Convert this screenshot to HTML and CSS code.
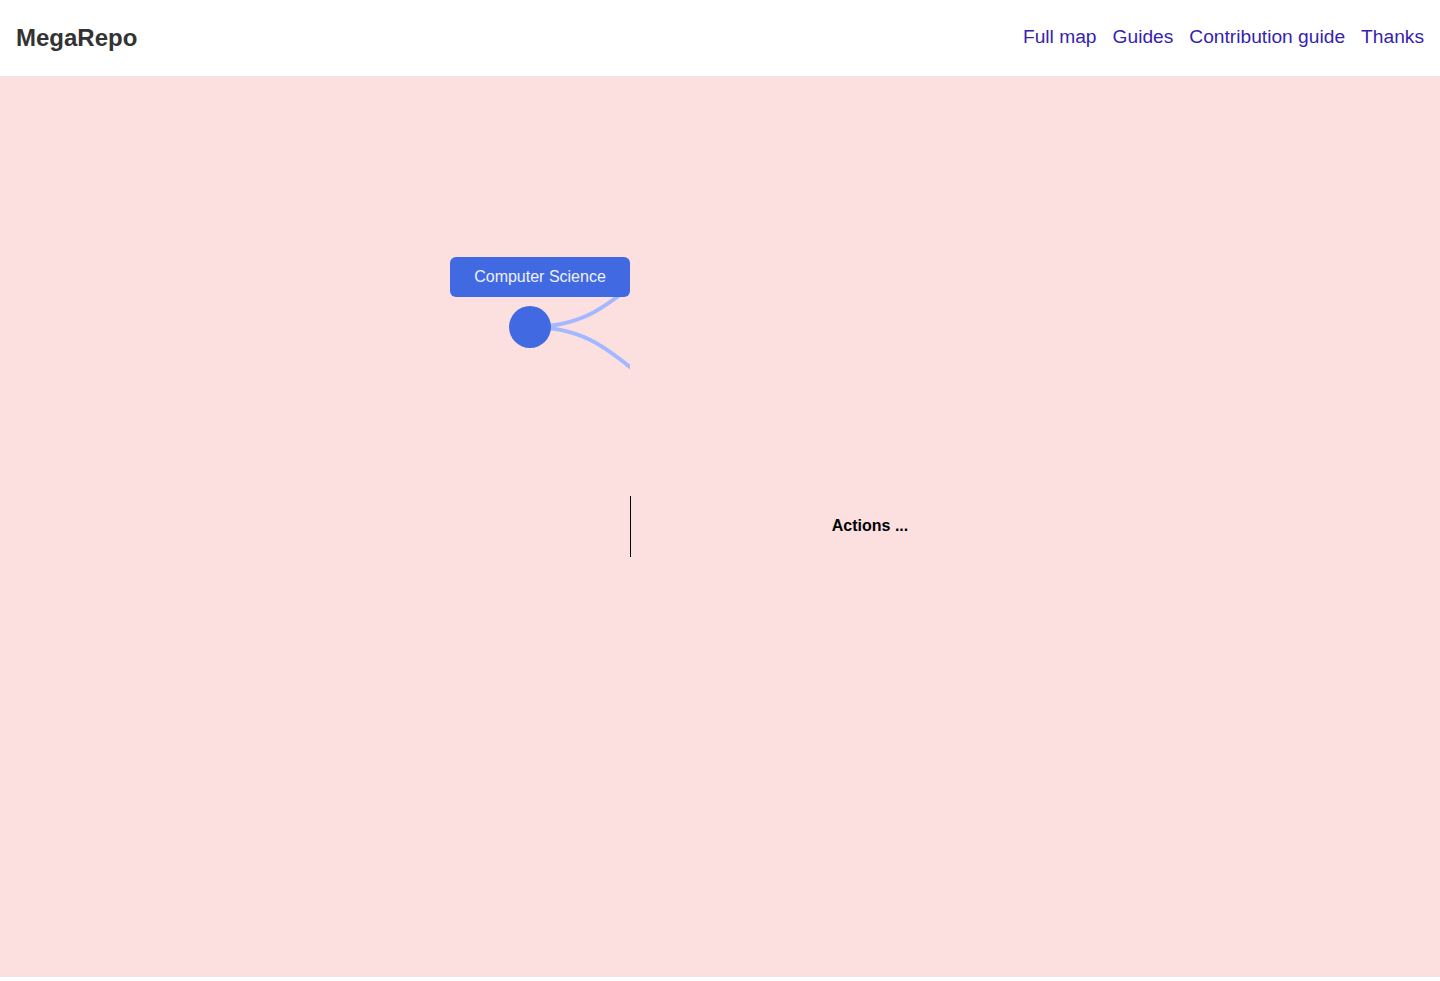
FILE: index.html
```html
<!DOCTYPE html>
<html lang="en">
<head>
<meta charset="utf-8">
<title>MegaRepo</title>
<link rel="stylesheet" href="styles.css">
</head>
<body>
<header class="topbar">
  <div class="logo">MegaRepo</div>
  <nav class="nav">
    <a href="#">Full map</a>
    <a href="#">Guides</a>
    <a href="#">Contribution guide</a>
    <a href="#">Thanks</a>
  </nav>
</header>
<main class="stage">
  <div class="canvas">
    <svg class="links" width="180" height="140" viewBox="450 250 180 140">
      <path d="M530,327 C630,327 630,247 730,247" />
      <path d="M530,327 C630,327 630,407 730,407" />
      <circle cx="530" cy="327" r="21" />
    </svg>
    <button class="node-label">Computer Science</button>
  </div>
  <div class="panel">
    <div class="divider"></div>
    <div class="actions">Actions ...</div>
  </div>
</main>
</body>
</html>
```

FILE: styles.css
```css
html, body {
  margin: 0;
  padding: 0;
  background: #ffffff;
}
body {
  font-family: "Liberation Sans", Arial, sans-serif;
}
.topbar {
  height: 76px;
  display: flex;
  align-items: center;
  justify-content: space-between;
  padding: 0 16px;
  border-bottom: 1px solid #ebe4e4;
  box-sizing: content-box;
}
.logo {
  font-size: 24px;
  font-weight: bold;
  color: #333333;
  margin-top: -1px;
}
.nav {
  display: flex;
  gap: 16px;
  margin-top: -3px;
}
.nav a {
  font-size: 19.2px;
  color: #3523b0;
  text-decoration: none;
}
.stage {
  position: relative;
  height: 900px;
  background: #fce0e0;
  display: flex;
  align-items: center;
}
.canvas {
  position: absolute;
  inset: 0;
}
.links {
  position: absolute;
  left: 450px;
  top: 173px;
  overflow: hidden;
}
.links path {
  fill: none;
  stroke: #a3b8ff;
  stroke-width: 4;
}
.links circle {
  fill: #4169e1;
}
.node-label {
  position: absolute;
  left: 450px;
  top: 180px;
  width: 180px;
  height: 40px;
  border: none;
  border-radius: 6px;
  background: #4169e1;
  color: #eef1ff;
  font-family: "Liberation Sans", Arial, sans-serif;
  font-size: 16px;
  padding: 0;
}
.panel {
  position: relative;
  display: flex;
  align-items: center;
  margin-left: 630px;
  margin-top: -2px;
}
.divider {
  width: 1px;
  height: 61px;
  background: #000000;
}
.actions {
  width: 478px;
  text-align: center;
  font-weight: bold;
  font-size: 16px;
  color: #000000;
}
```
